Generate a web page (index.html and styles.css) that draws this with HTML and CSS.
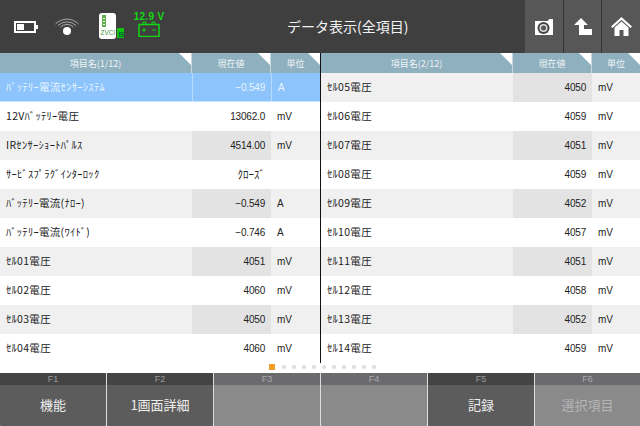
FILE: index.html
```html
<!DOCTYPE html>
<html lang="ja">
<head>
<meta charset="utf-8">
<title>データ表示</title>
<link rel="stylesheet" href="styles.css">
</head>
<body>
<div class="app">
  <header class="top">
    <div class="status">
      <svg class="ic-batt" width="24" height="12" viewBox="0 0 24 12"><rect x="1" y="1" width="20" height="10" fill="none" stroke="#fff" stroke-width="2"/><rect x="3" y="3" width="7" height="6" fill="#fff"/><rect x="22" y="4" width="2" height="4" fill="#fff"/></svg>
      <svg class="ic-wifi" width="24" height="20" viewBox="0 0 24 20"><g fill="none" stroke="#a8a8a8" stroke-width="1"><path d="M0.500 8a16 16 0 0 1 23 0"/><path d="M3 9.500a13 13 0 0 1 18 0"/><path d="M5.500 11a9.500 9.500 0 0 1 13 0"/></g><circle cx="12" cy="15" r="4" fill="#fff"/></svg>
      <svg class="ic-zvci" width="26" height="26" viewBox="0 0 26 26"><rect x="0" y="0" width="17" height="26" rx="3" fill="#fff"/><rect x="3" y="2" width="4" height="12" fill="#5fb04a"/><rect x="4" y="5" width="2" height="1" fill="#fff"/><rect x="4" y="8" width="2" height="1" fill="#fff"/><rect x="4" y="11" width="2" height="1" fill="#fff"/><text x="1.500" y="22" class="zv">ZVCI</text><rect x="18" y="15" width="7" height="10" fill="#12c212"/><text x="19.500" y="23.500" class="zb">B</text></svg>
      <div class="car">
        <span class="volt">12.9 V</span>
        <svg width="22" height="16" viewBox="0 0 22 16"><path d="M5 3V1h3v2M14 3V1h3v2" fill="none" stroke="#12d812" stroke-width="1"/><rect x="1" y="3.500" width="20" height="12" fill="none" stroke="#12d812" stroke-width="1.500"/><path d="M4 9h4M6 7v4M14 9h4" stroke="#12d812" stroke-width="1"/></svg>
      </div>
    </div>
    <h1 class="title">データ表示(全項目)</h1>
    <div class="tools">
      <button class="tool"><svg width="20" height="18" viewBox="0 0 20 18"><path d="M1 3h13l1-2h4v16H1z" fill="#fff"/><circle cx="9.500" cy="10" r="6" fill="#444"/><circle cx="9.500" cy="10" r="4" fill="#ddd"/><circle cx="9.500" cy="10" r="2.500" fill="#555"/></svg></button>
      <button class="tool"><svg width="18" height="17" viewBox="0 0 18 17"><path d="M7 0 L14 7 H10 V11 H18 V17 H5 V7 H0 Z" fill="#fff"/></svg></button>
      <button class="tool"><svg width="21" height="19" viewBox="0 0 21 19"><path d="M10.500 0 L21 9.500 L19.500 11 L10.500 3 L1.500 11 L0 9.500 Z" fill="#fff"/><path d="M3.500 10.500 L10.500 4.500 L17.500 10.500 V19 H12.500 V13 H8.500 V19 H3.500 Z" fill="#fff"/></svg></button>
    </div>
  </header>

  <main class="tables">
    <section class="panel">
      <div class="row head"><div class="c name">項目名(1/12)</div><div class="c val">現在値</div><div class="c unit">単位</div></div>
      <div class="row sel"><div class="c name">ﾊﾞｯﾃﾘｰ電流ｾﾝｻｰｼｽﾃﾑ</div><div class="c val">−0.549</div><div class="c unit">A</div></div>
      <div class="row"><div class="c name">12Vﾊﾞｯﾃﾘｰ電圧</div><div class="c val">13062.0</div><div class="c unit">mV</div></div>
      <div class="row alt"><div class="c name">IRｾﾝｻｰｼｮｰﾄﾊﾟﾙｽ</div><div class="c val">4514.00</div><div class="c unit">mV</div></div>
      <div class="row"><div class="c name">ｻｰﾋﾞｽﾌﾟﾗｸﾞｲﾝﾀｰﾛｯｸ</div><div class="c val kana">ｸﾛｰｽﾞ</div><div class="c unit"></div></div>
      <div class="row alt"><div class="c name">ﾊﾞｯﾃﾘｰ電流(ﾅﾛｰ)</div><div class="c val">−0.549</div><div class="c unit">A</div></div>
      <div class="row"><div class="c name">ﾊﾞｯﾃﾘｰ電流(ﾜｲﾄﾞ)</div><div class="c val">−0.746</div><div class="c unit">A</div></div>
      <div class="row alt"><div class="c name">ｾﾙ01電圧</div><div class="c val">4051</div><div class="c unit">mV</div></div>
      <div class="row"><div class="c name">ｾﾙ02電圧</div><div class="c val">4060</div><div class="c unit">mV</div></div>
      <div class="row alt"><div class="c name">ｾﾙ03電圧</div><div class="c val">4050</div><div class="c unit">mV</div></div>
      <div class="row"><div class="c name">ｾﾙ04電圧</div><div class="c val">4060</div><div class="c unit">mV</div></div>
    </section>
    <section class="panel right">
      <div class="row head"><div class="c name">項目名(2/12)</div><div class="c val">現在値</div><div class="c unit">単位</div></div>
      <div class="row alt"><div class="c name">ｾﾙ05電圧</div><div class="c val">4050</div><div class="c unit">mV</div></div>
      <div class="row"><div class="c name">ｾﾙ06電圧</div><div class="c val">4059</div><div class="c unit">mV</div></div>
      <div class="row alt"><div class="c name">ｾﾙ07電圧</div><div class="c val">4051</div><div class="c unit">mV</div></div>
      <div class="row"><div class="c name">ｾﾙ08電圧</div><div class="c val">4059</div><div class="c unit">mV</div></div>
      <div class="row alt"><div class="c name">ｾﾙ09電圧</div><div class="c val">4052</div><div class="c unit">mV</div></div>
      <div class="row"><div class="c name">ｾﾙ10電圧</div><div class="c val">4057</div><div class="c unit">mV</div></div>
      <div class="row alt"><div class="c name">ｾﾙ11電圧</div><div class="c val">4051</div><div class="c unit">mV</div></div>
      <div class="row"><div class="c name">ｾﾙ12電圧</div><div class="c val">4058</div><div class="c unit">mV</div></div>
      <div class="row alt"><div class="c name">ｾﾙ13電圧</div><div class="c val">4052</div><div class="c unit">mV</div></div>
      <div class="row"><div class="c name">ｾﾙ14電圧</div><div class="c val">4059</div><div class="c unit">mV</div></div>
    </section>
  </main>

  <div class="pager">
    <i class="dot on"></i><i class="dot"></i><i class="dot"></i><i class="dot"></i><i class="dot"></i><i class="dot"></i><i class="dot"></i><i class="dot"></i><i class="dot"></i><i class="dot"></i><i class="dot"></i>
  </div>

  <footer class="fbar">
    <button class="fk"><span class="fn">F1</span><span class="fl">機能</span></button>
    <button class="fk"><span class="fn">F2</span><span class="fl">1画面詳細</span></button>
    <button class="fk off"><span class="fn">F3</span><span class="fl"></span></button>
    <button class="fk off"><span class="fn">F4</span><span class="fl"></span></button>
    <button class="fk"><span class="fn">F5</span><span class="fl">記録</span></button>
    <button class="fk off"><span class="fn">F6</span><span class="fl">選択項目</span></button>
  </footer>
</div>
</body>
</html>
```
FILE: styles.css
```css
* { box-sizing: border-box; }
html, body { margin: 0; padding: 0; background: #fff; }
body { font-family: "Liberation Sans", "Noto Sans CJK JP", sans-serif; }
.app { width: 640px; height: 426px; display: flex; flex-direction: column; overflow: hidden; }

.top { height: 53px; background: #3f3f3f; display: flex; align-items: stretch; flex: none; }
.status { width: 213px; display: flex; align-items: flex-start; padding: 13px 0 0 14px; flex: none; }
.ic-batt { margin-top: 8px; margin-right: 17px; height: 12px; }
.ic-wifi { margin-top: 3px; margin-right: 20px; }
.ic-zvci { margin-right: 14px; }
.zv { font: 6.500px "Liberation Sans", sans-serif; fill: #4a9a3a; }
.zb { font: bold 8px "Liberation Sans", sans-serif; fill: #063; }
.car { display: flex; flex-direction: column; align-items: center; width: 30px; margin-top: -1px; margin-left: -5px; }
.volt { color: #12d812; font-size: 10px; font-weight: 700; line-height: 10px; white-space: nowrap; letter-spacing: 0.300px; }
.car svg { margin-top: -1px; }
.title { flex: 1; margin: 0; font-family: "Noto Sans CJK JP", sans-serif; font-weight: 400; font-size: 14px; color: #f2f2f2; line-height: 53px; text-align: left; padding-left: 74px; }
.tools { display: flex; gap: 1px; flex: none; width: 115px; background: #333; }
.tool { flex: 1; border: 0; padding: 0; background: #575757; display: flex; align-items: center; justify-content: center; }

.tables { display: grid; grid-template-columns: 320px 320px; flex: none; }
.panel { display: flex; flex-direction: column; }
.panel.right { border-left: 1px solid #111; }
.row { display: grid; grid-template-columns: 192px 79px 1fr; height: 29px; align-items: stretch; font-size: 10px; color: #222; }
.c { display: flex; align-items: center; font-family: "Noto Sans CJK JP", "Liberation Sans", sans-serif; }
.name { padding: 0 0 2px 6px; color: #222; font-size: 10.500px; letter-spacing: 0.300px; }
.val { justify-content: flex-end; padding-right: 6px; letter-spacing: -0.200px; font-family: "Liberation Sans", "Noto Sans CJK JP", sans-serif; }
.val.kana { font-size: 11px; padding-bottom: 2px; letter-spacing: 0; }
.unit { padding-left: 6px; font-family: "Liberation Sans", sans-serif; }
.alt { background: #f0f0f0; }
.alt .val { background: #e3e3e3; }
.sel { background: #8cc4fb; color: #e8f4ff; border-bottom: 1px solid #c6e2fc; }
.sel .name { color: #eaf5ff; }
.sel .c + .c { border-left: 1px solid #b8dafb; }

.row.head { height: 20px; background: #8fb0bf; color: #eef4f6; }
.head .c { position: relative; justify-content: center; padding: 0; letter-spacing: 0; color: #eef4f6; font-size: 9px; font-family: "Noto Sans CJK JP", sans-serif; border-right: 1px solid #c7d8e0; }
.head .c::after { content: ""; position: absolute; top: 0; right: 0; border-style: solid; border-width: 0 12px 12px 0; border-color: transparent #fff transparent transparent; }
.head .unit { border-right: 0; }

.pager { height: 10px; flex: none; display: flex; align-items: center; gap: 6px; padding: 0 0 2px 269px; }
.dot { width: 4px; height: 4px; border-radius: 50%; background: #dcdcdc; display: block; }
.dot.on { width: 6px; height: 6px; border-radius: 0; background: #f09a2a; margin-right: 1px; }

.fbar { flex: 1; display: grid; grid-template-columns: repeat(5, 106px) 1fr; gap: 0 1px; background: #ddd; }
.fk { border: 0; padding: 0; display: flex; flex-direction: column; background: #5c5c5c; color: #eee; font-family: "Noto Sans CJK JP", sans-serif; border-radius: 1px; }
.fn { height: 12px; width: 100%; background: #444; color: #999; font: 9px/12px "Liberation Sans", sans-serif; text-align: center; flex: none; }
.fl { flex: 1; width: 100%; font-size: 13px; line-height: 40px; text-align: center; }
.off { background: #8a8a8a; color: #b5b5b5; }
.off .fn { background: #6b6b6f; color: #aaa; }
```
